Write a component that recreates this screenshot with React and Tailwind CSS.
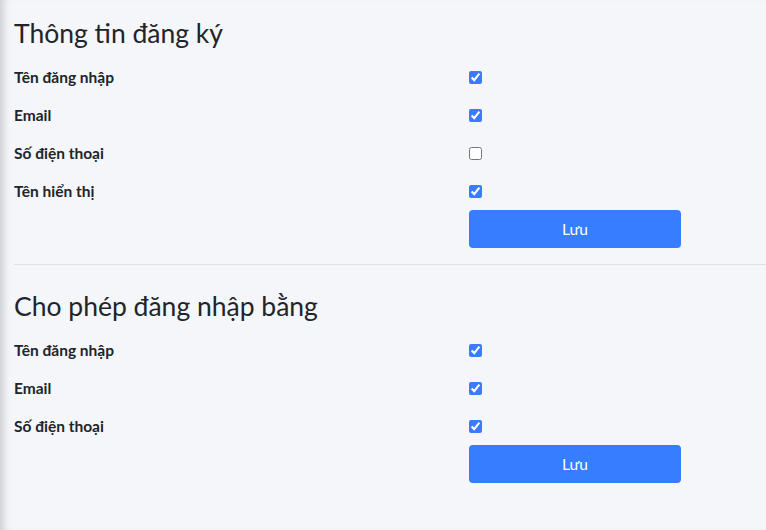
const SECTIONS = [
  {
    title: "Thông tin đăng ký",
    fields: [
      { label: "Tên đăng nhập", checked: true },
      { label: "Email", checked: true },
      { label: "Số điện thoại", checked: false },
      { label: "Tên hiển thị", checked: true },
    ],
  },
  {
    title: "Cho phép đăng nhập bằng",
    fields: [
      { label: "Tên đăng nhập", checked: true },
      { label: "Email", checked: true },
      { label: "Số điện thoại", checked: true },
    ],
  },
];

function Section({ title, fields }) {
  return (
    <section className="pl-[14px]">
      <h2 className="h-[58px] pt-[16px] text-[26.5px] leading-[34px] font-normal text-[#212529]">{title}</h2>
      {fields.map((f) => (
        <label key={f.label} className="grid grid-cols-[455px_1fr] h-[38px] items-center">
          <span className="pt-[2px] text-[15.5px] font-bold text-[#212529]">{f.label}</span>
          <input
            type="checkbox"
            defaultChecked={f.checked}
            className="m-0 w-[13px] h-[13px] accent-[#3a7bff]"
          />
        </label>
      ))}
      <div className="grid grid-cols-[455px_1fr]">
        <div />
        <button className="w-[212px] h-[38px] pt-[2px] rounded-[4px] bg-[#377dff] text-white text-[15.5px]">Lưu</button>
      </div>
    </section>
  );
}

export default function App() {
  return (
    <div
      className="min-h-screen bg-[#f5f6fa] shadow-[inset_9px_0_8px_-6px_rgba(0,0,0,0.18)]"
      style={{ fontFamily: "Lato, 'Noto Sans', sans-serif" }}
    >
      <Section {...SECTIONS[0]} />
      <div className="ml-[14px] mt-[16px] mb-[8px] border-t border-[#dee2e6]" />
      <Section {...SECTIONS[1]} />
    </div>
  );
}
